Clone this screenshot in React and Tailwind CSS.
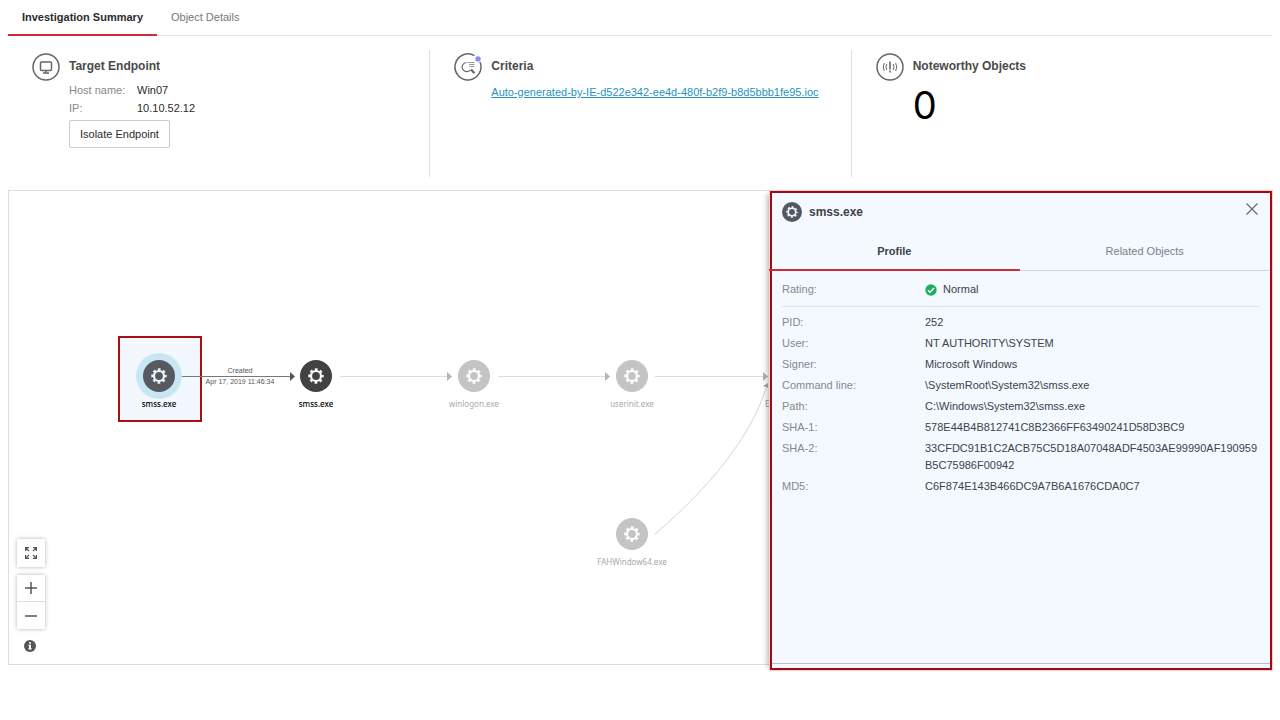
import { useState } from 'react';

const profileRows = [
  { label: 'PID:', value: '252' },
  { label: 'User:', value: 'NT AUTHORITY\\SYSTEM' },
  { label: 'Signer:', value: 'Microsoft Windows' },
  { label: 'Command line:', value: '\\SystemRoot\\System32\\smss.exe' },
  { label: 'Path:', value: 'C:\\Windows\\System32\\smss.exe' },
  { label: 'SHA-1:', value: '578E44B4B812741C8B2366FF63490241D58D3BC9' },
  { label: 'SHA-2:', value: '33CFDC91B1C2ACB75C5D18A07048ADF4503AE99990AF190959B5C75986F00942' },
  { label: 'MD5:', value: 'C6F874E143B466DC9A7B6A1676CDA0C7' },
];

function Gear({ className }) {
  return (
    <svg className={className} viewBox="0 0 16 16" fill="none" stroke="currentColor">
      <circle cx="8" cy="8" r="5" strokeWidth="2.2" />
      <circle cx="8" cy="8" r="6.6" strokeWidth="2.2" strokeDasharray="2.7 2.484" strokeDashoffset="1.35" />
    </svg>
  );
}

function RoundIcon({ children, gap }) {
  return (
    <svg className="w-7 h-7 shrink-0" viewBox="0 0 28 28" fill="none" stroke="#666" strokeWidth="1.5">
      {gap ? <path d="M20.5 2.7A13 13 0 1 0 26 9" /> : <circle cx="14" cy="14" r="13" />}
      {children}
    </svg>
  );
}

function Summary({ icon, title, children }) {
  return (
    <section className="flex items-start gap-[9px] pl-6 pt-[3px] border-l border-[#dedede] first:border-l-0">
      {icon}
      <div className="min-w-0 pt-1">
        <h2 className="text-[12px] leading-[18px] font-bold text-[#4a4a4a]">{title}</h2>
        {children}
      </div>
    </section>
  );
}

// Graph node, positioned by its centre on the canvas
function Node({ name, className, dark, selected }) {
  return (
    <div className={`absolute flex w-24 -translate-x-1/2 -translate-y-[23px] flex-col items-center ${className}`}>
      <span
        className={`flex w-[46px] h-[46px] items-center justify-center rounded-full ${
          selected ? 'bg-[#c9e6f3]' : ''
        }`}
      >
        <span
          className={`flex w-8 h-8 items-center justify-center rounded-full ${
            selected ? 'bg-[#565a60] text-[#eef7ff]' : dark ? 'bg-[#424242] text-white' : 'bg-[#c4c4c4] text-white'
          }`}
        >
          <Gear className="w-4 h-4" />
        </span>
      </span>
      <span
        className={`font-['Noto_Sans',sans-serif] text-[8px] leading-[10px] whitespace-nowrap ${
          dark || selected ? 'text-black font-medium' : 'text-[#aaa]'
        }`}
      >
        {name}
      </span>
    </div>
  );
}

function Canvas() {
  return (
    <div className="relative flex-1 min-w-0 h-[475px] overflow-hidden border border-r-0 border-[#dedede] bg-white">
      <div className="absolute left-[109px] top-[145px] w-[84px] h-[86px] border-2 border-[#a80f14] bg-[#f3f8ff]" />

      <svg className="absolute left-0 top-0" width="761" height="473" fill="none">
        <path d="M173 185.5H281" stroke="#777" />
        <path d="M281 181v9l5-4.500z" fill="#555" />
        <path d="M331 185.500H439M489 185.500H597M646 185.500H754" stroke="#ddd" />
        <path d="M438 181v9l5-4.500zM596 181v9l5-4.500zM754 181v9l5-4.500z" fill="#b5b5b5" />
        <path d="M646 343C700 297 742 246 757 197" stroke="#d5d5d5" />
        <path d="M754 195l5-3v5z" fill="#aaa" />
      </svg>

      <div className="absolute left-[231px] top-[174px] -translate-x-1/2 text-center text-[7px] leading-[11px] whitespace-nowrap text-[#555]">
        <p>Created</p>
        <p>Apr 17, 2019 11:46:34</p>
      </div>

      <Node name="smss.exe" className="left-[150px] top-[185px]" selected />
      <Node name="smss.exe" className="left-[307px] top-[185px]" dark />
      <Node name="winlogon.exe" className="left-[465px] top-[185px]" />
      <Node name="userinit.exe" className="left-[623px] top-[185px]" />
      <Node name="FAHWindow64.exe" className="left-[623px] top-[343px]" />
      <span className="absolute left-[756px] top-[208px] font-['Noto_Sans',sans-serif] text-[8px] leading-[10px] text-[#999]">
        E
      </span>

      {/* Zoom controls */}
      <div className="absolute bottom-3 left-2 flex flex-col items-center gap-2 text-[#555]">
        <button aria-label="Fit to screen" className="flex w-7 h-7 items-center justify-center bg-white shadow-[0_0_4px_rgba(0,0,0,0.3)]">
          <svg className="w-3 h-3" viewBox="0 0 12 12" fill="none" stroke="currentColor" strokeWidth="1.2">
            <path d="M.6 4V.6H4M.6.6l3.400 3.400M8 .6h3.400V4M11.400.6L8 4M.6 8v3.400H4M.6 11.400L4 8M8 11.400h3.400V8M11.400 11.400L8 8" />
          </svg>
        </button>
        <div className="flex w-7 flex-col bg-white shadow-[0_0_4px_rgba(0,0,0,0.3)]">
          <button aria-label="Zoom in" className="flex h-[27px] items-center justify-center border-b border-[#ddd]">
            <svg className="w-3 h-3" viewBox="0 0 12 12" stroke="currentColor" strokeWidth="1.500">
              <path d="M6 0v12M0 6h12" />
            </svg>
          </button>
          <button aria-label="Zoom out" className="flex h-[27px] items-center justify-center">
            <svg className="w-3 h-3" viewBox="0 0 12 12" stroke="currentColor" strokeWidth="1.500">
              <path d="M0 6h12" />
            </svg>
          </button>
        </div>
        <button aria-label="Legend" className="mt-[3px] mr-[3px] w-3 h-3">
          <svg viewBox="0 0 12 12">
            <circle cx="6" cy="6" r="6" fill="#555" />
            <path d="M5 2.300h2v1.500H5zM4.500 4.800H7v3.500h.7v1.200H4.400V8.300H5V6h-.5z" fill="#fff" />
          </svg>
        </button>
      </div>
    </div>
  );
}

function Row({ label, children }) {
  return (
    <div className="flex">
      <dt className="w-[143px] shrink-0 text-[#85888e]">{label}</dt>
      <dd className="min-w-0 break-all text-[#404348]">{children}</dd>
    </div>
  );
}

function DetailPanel() {
  const [tab, setTab] = useState('profile');
  const tabs = [
    { id: 'profile', label: 'Profile' },
    { id: 'related', label: 'Related Objects' },
  ];

  return (
    <aside className="relative flex w-[502px] min-h-[479px] shrink-0 flex-col border-2 border-[#a30a10] bg-[#f4f8ff] mt-px leading-[17px] shadow-[0_0_0_1px_#f3cfd0,-6px_0_5px_-3px_rgba(0,0,0,0.25)]">
      <header className="flex h-[38px] items-center pl-[10px] pr-3">
        <span className="flex w-5 h-5 items-center justify-center rounded-full bg-[#55585e] text-[#f4f8ff]">
          <Gear className="w-3 h-3" />
        </span>
        <h2 className="ml-[7px] flex-1 text-[12px] font-bold text-[#404348]">smss.exe</h2>
        <button aria-label="Close" className="mb-[6px] w-3 h-3 text-[#6b6e73]">
          <svg viewBox="0 0 12 12" stroke="currentColor" strokeWidth="1.300">
            <path d="M.5.5l11 11M11.500.5l-11 11" />
          </svg>
        </button>
      </header>

      {/* the tab underline runs over the panel's left edge */}
      <div role="tablist" className="-ml-[3px] flex h-10 border-b border-[#d3d8e2]">
        {tabs.map((t) => (
          <button
            key={t.id}
            role="tab"
            aria-selected={tab === t.id}
            onClick={() => setTab(t.id)}
            className={`-mb-px flex-1 border-b-2 pt-[2px] ${
              tab === t.id ? 'border-[#cf2a35] font-bold text-[#404348]' : 'border-transparent text-[#7d8086]'
            }`}
          >
            {t.label}
          </button>
        ))}
      </div>

      <dl className="flex flex-1 flex-col gap-1 px-[10px] pt-[10px]">
        <div className="mb-[3px] border-b border-[#dfe5f0] pb-2">
          <Row label="Rating:">
            <span className="flex items-center gap-[6px]">
              <svg className="w-3 h-3" viewBox="0 0 12 12" fill="none">
                <circle cx="6" cy="6" r="5.700" fill="#23ad61" />
                <path d="M3 6.200l2 2 4-4.200" stroke="#fff" strokeWidth="1.400" />
              </svg>
              Normal
            </span>
          </Row>
        </div>
        {profileRows.map((row) => (
          <Row key={row.label} label={row.label}>
            {row.value}
          </Row>
        ))}
      </dl>
      <div className="mb-1 border-b border-[#b9bec8]" />
    </aside>
  );
}

export default function App() {
  return (
    <main className="px-2 pb-12 bg-white font-['Liberation_Sans',Arial,sans-serif] text-[11px] text-[#2b2b2b]">
      <nav className="flex h-9 border-b border-[#e2e2e2]">
        <button className="-mb-px w-[149px] border-b-2 border-[#cf2a35] font-bold">Investigation Summary</button>
        <button className="px-[14px] pb-px text-[#777]">Object Details</button>
      </nav>

      <div className="grid grid-cols-3 h-[154px] pt-[14px] pb-[13px]">
        <Summary
          title="Target Endpoint"
          icon={
            <RoundIcon>
              <rect x="8.500" y="9" width="11" height="8.500" rx="1" />
              <path d="M11 20h6M14 17.500V20" />
            </RoundIcon>
          }
        >
          <dl className="mt-[6px] leading-[18px]">
            <div className="flex">
              <dt className="w-[68px] text-[#888]">Host name:</dt>
              <dd>Win07</dd>
            </div>
            <div className="flex">
              <dt className="w-[68px] text-[#888]">IP:</dt>
              <dd>10.10.52.12</dd>
            </div>
          </dl>
          <button className="mt-[3px] h-7 rounded-xs border border-[#ccc] bg-white px-[10px]">Isolate Endpoint</button>
        </Summary>

        <Summary
          title="Criteria"
          icon={
            <RoundIcon gap>
              <circle cx="24" cy="6" r="2.700" fill="#8b8fe6" stroke="none" />
              <path d="M13.500 9.500h7M15 11.500h5.500M15.500 13.500h5" stroke="#999" strokeWidth="1" />
              <path d="M12.500 9.500a4.600 4.600 0 1 0 3.700 7.600" strokeWidth="1.200" />
              <path d="M17 16.500l3.500 3.800" strokeWidth="2.200" />
            </RoundIcon>
          }
        >
          <a href="#criteria" className="mt-2 block whitespace-nowrap leading-[18px] text-[#1f93bd] underline">
            Auto-generated-by-IE-d522e342-ee4d-480f-b2f9-b8d5bbb1fe95.ioc
          </a>
        </Summary>

        <Summary
          title="Noteworthy Objects"
          icon={
            <RoundIcon>
              <path d="M14 8.500v8M14 17.500v2" strokeWidth="1.600" />
              <path d="M10.800 11q-1.600 3 0 6M8.300 10q-2 4 0 8M17.200 11q1.600 3 0 6M19.700 10q2 4 0 8" strokeWidth="1" />
            </RoundIcon>
          }
        >
          <p className="mt-[10px] font-['Inter',sans-serif] text-[38px] leading-10 text-black">0</p>
        </Summary>
      </div>

      <div className="flex items-start">
        <Canvas />
        <DetailPanel />
      </div>
    </main>
  );
}
